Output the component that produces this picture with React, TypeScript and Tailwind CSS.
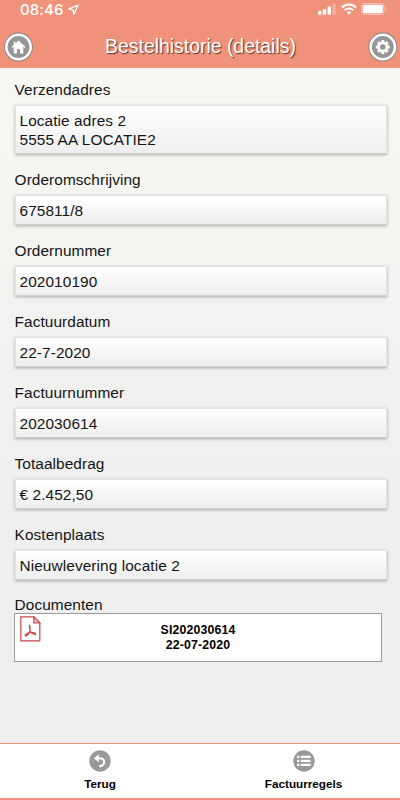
const fields = [
  { label: 'Verzendadres', lines: ['Locatie adres 2', '5555 AA LOCATIE2'] },
  { label: 'Orderomschrijving', lines: ['675811/8'] },
  { label: 'Ordernummer', lines: ['202010190'] },
  { label: 'Factuurdatum', lines: ['22-7-2020'] },
  { label: 'Factuurnummer', lines: ['202030614'] },
  { label: 'Totaalbedrag', lines: ['€ 2.452,50'] },
  { label: 'Kostenplaats', lines: ['Nieuwlevering locatie 2'] },
];

function StatusBar() {
  return (
    <div className="flex h-[19px] items-center pl-5 pr-[13px] text-white">
      <span className="font-['Inter','Liberation_Sans',sans-serif] text-[15px] leading-[19px] font-medium tracking-[0.1px]">08:46</span>
      <svg className="ml-[5px] mb-px" width="11" height="11" viewBox="0 0 10 10" fill="none" stroke="currentColor" strokeWidth="1.2" strokeLinejoin="round">
        <path d="M9.2.9.8 4.4l3.8.9.8 3.9z" />
      </svg>
      <div className="ml-auto mb-px flex items-center">
        <svg width="18" height="12" viewBox="0 0 18 12" fill="currentColor">
          <rect x="0" y="8" width="3.3" height="3.8" rx=".6" />
          <rect x="4.8" y="6.2" width="3.3" height="5.6" rx=".6" />
          <rect x="9.6" y="3.4" width="3.3" height="8.4" rx=".6" />
          <rect x="14.5" y="1" width="3.3" height="10.8" rx=".6" opacity=".3" />
        </svg>
        <svg className="ml-[5px]" width="16" height="12" viewBox="0 0 16 12" fill="none" stroke="currentColor" strokeWidth="2.1">
          <path d="M1 4.4a10 10 0 0 1 14 0M3.7 7.3a6.2 6.2 0 0 1 8.6 0" />
          <path d="M8 11.8 5.7 9.5a3.2 3.2 0 0 1 4.6 0z" fill="currentColor" stroke="none" />
        </svg>
        <svg className="ml-[4px]" width="26" height="12" viewBox="0 0 26 12">
          <rect x=".5" y=".5" width="22.5" height="11" rx="2.5" fill="none" stroke="white" opacity=".45" />
          <rect x="1.7" y="1.8" width="20.1" height="8.4" rx="1.2" fill="white" />
          <path d="M24.3 4v4c1.5-.5 1.5-3.5 0-4z" fill="white" opacity=".45" />
        </svg>
      </div>
    </div>
  );
}

function HomeIcon() {
  return (
    <svg width="30" height="30" viewBox="0 0 30 30">
      <circle cx="15.5" cy="15" r="14.4" fill="#858585" />
      <circle cx="15.5" cy="15" r="13.5" fill="white" />
      <circle cx="15.5" cy="15" r="10.9" fill="#969696" />
      <path d="M15.5 8.5l7 6.5-.9.9-1.3-1.1V21.5h-3.2v-4.2h-3.2v4.2h-3.2v-6.7l-1.3 1.1-.9-.9 2.2-2V9.7h1.7v1.7z" fill="white" />
    </svg>
  );
}

function GearIcon() {
  return (
    <svg width="30" height="30" viewBox="0 0 30 30">
      <circle cx="14.8" cy="15" r="14.4" fill="#858585" />
      <circle cx="14.8" cy="15" r="13.5" fill="white" />
      <circle cx="14.8" cy="15" r="10.9" fill="#969696" />
      <g transform="translate(-.2)">
        <path d="M15 8v14M8 15h14M10.1 10.1l9.8 9.8M10.1 19.9l9.8-9.8" stroke="white" strokeWidth="3" />
        <circle cx="15" cy="15" r="5.4" fill="white" />
        <circle cx="15" cy="15" r="2.8" fill="#969696" />
      </g>
    </svg>
  );
}

function Header() {
  return (
    <header className="h-[68px] bg-[#f0917a]">
      <StatusBar />
      <div className="flex h-[49px] items-center justify-between pl-[3px] pr-[2px] pt-[7px]">
        <button><HomeIcon /></button>
        <h1 className="mb-[3px] text-[19.4px] leading-6 text-white [text-shadow:1px_1px_1px_rgba(0,0,0,0.65)]">Bestelhistorie (details)</h1>
        <button><GearIcon /></button>
      </div>
    </header>
  );
}

function Field({ label, lines }: { label: string; lines: string[] }) {
  return (
    <div className="mb-4">
      <div className="mb-[5px] pl-[0.6px] text-[15.4px] leading-5 tracking-[0.07px]">{label}</div>
      <div className="ml-[0.5px] border border-[#e4e4e4] border-b-[#cfcfcf] bg-linear-to-b from-white to-[#eeeeee] px-1 pt-[5px] pb-[4px] text-[15.4px] leading-[19px] tracking-[0.09px] shadow-[0_1px_3px_rgba(0,0,0,0.3)]">
        {lines.map((line) => (
          <div key={line}>{line}</div>
        ))}
      </div>
    </div>
  );
}

function PdfIcon() {
  return (
    <svg width="21" height="26" viewBox="0 0 21 26" fill="none" stroke="#c9484a" strokeWidth="1.2">
      <path d="M.8.8h13l6 6v18H.8z" />
      <path d="M13.8.8v6h6z" fill="#f3c9c9" />
      <path d="M9.6 9.3c-.7 1.5 1 4.2.3 6.2-.7 2-3 4.6-4.6 4.4-.9-1.4 3-3.2 5.2-3.5 2-.2 5.4.5 5.3 1.8-1.5 1-4.6-1.2-5.6-2.8-.9-1.6.5-4.6-.6-6.1z" strokeWidth="1.3" strokeLinejoin="round" />
    </svg>
  );
}

function Footer() {
  return (
    <footer className="flex h-[57px] border-t border-b-2 border-t-[#f0917a] border-b-[#f0917a] bg-white text-[11.7px] font-bold text-black">
      <button className="flex w-[200px] flex-col items-center pt-[6px]">
        <svg width="22" height="22" viewBox="0 0 22 22" fill="none">
          <circle cx="11" cy="11" r="10.7" fill="#999" />
          <path d="M8 8.2h2.8c5.6 0 6.2 7.4-.6 8.2" stroke="white" strokeWidth="2.1" />
          <path d="M4.8 8.2l5-4v8z" fill="white" />
        </svg>
        <span className="mt-[4px] leading-4">Terug</span>
      </button>
      <button className="flex w-[200px] flex-col items-center pt-[6px] pl-[7px]">
        <svg width="22" height="22" viewBox="0 0 22 22" fill="white">
          <circle cx="11" cy="11" r="10.7" fill="#999" />
          <path d="M4 5.8h2.3v2.3H4zM7.7 5.8h10v2.3h-10zM4 9.8h2.3v2.3H4zM7.7 9.8h10v2.3h-10zM4 13.8h2.3v2.3H4zM7.7 13.8h10v2.3h-10z" />
        </svg>
        <span className="mt-[4px] leading-4">Factuurregels</span>
      </button>
    </footer>
  );
}

export default function App() {
  return (
    <div className="flex h-[800px] w-[400px] flex-col bg-[#eeeeee] font-['Liberation_Sans',Arial,sans-serif] text-[#151515]">
      <Header />
      <main className="flex-1 bg-linear-to-b from-[#f7f7f2] via-[#efefef] via-60% to-[#eeeeee] pl-[14px] pr-[13px] pt-3">
        {fields.map((field) => (
          <Field key={field.label} label={field.label} lines={field.lines} />
        ))}
        <div className="h-[17px] pl-[0.6px] text-[15.4px] leading-[18px] tracking-[0.07px]">Documenten</div>
        <div className="mr-[5px] flex h-[49px] items-start border border-[#999] bg-white pl-[5px] pt-[2px]">
          <PdfIcon />
          <div className="flex-1 pt-[7px] pr-[26px] text-center text-[12.3px] leading-[15px] font-bold tracking-[0.15px] text-black">
            <div>SI202030614</div>
            <div>22-07-2020</div>
          </div>
        </div>
      </main>
      <Footer />
    </div>
  );
}
